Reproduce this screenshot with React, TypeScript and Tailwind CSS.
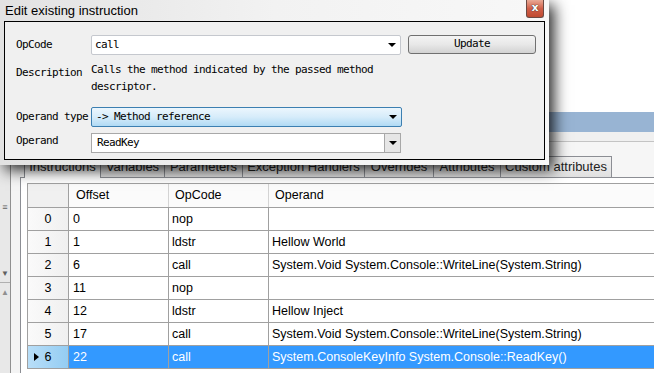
const rows = [
  { n: "0", off: "0", op: "nop", arg: "" },
  { n: "1", off: "1", op: "ldstr", arg: "Hellow World" },
  { n: "2", off: "6", op: "call", arg: "System.Void System.Console::WriteLine(System.String)" },
  { n: "3", off: "11", op: "nop", arg: "" },
  { n: "4", off: "12", op: "ldstr", arg: "Hellow Inject" },
  { n: "5", off: "17", op: "call", arg: "System.Void System.Console::WriteLine(System.String)" },
  { n: "6", off: "22", op: "call", arg: "System.ConsoleKeyInfo System.Console::ReadKey()", sel: true },
];

const tabs = [
  { label: "Instructions", w: "w-[77px]", active: true },
  { label: "Variables", w: "w-[65px]" },
  { label: "Parameters", w: "w-[79px]" },
  { label: "Exception Handlers", w: "w-[123px]" },
  { label: "Overrides", w: "w-[70px]" },
  { label: "Attributes", w: "w-[68px]" },
  { label: "Custom attributes", w: "w-[112px]" },
];

function Arrow() {
  return <span className="w-0 h-0 border-l-[4px] border-r-[4px] border-t-[4px] border-l-transparent border-r-transparent border-t-black" />;
}

function Grid() {
  return (
    <div className="border-t border-l border-[#a0a0a0] text-[12.5px] text-black" style={{ fontFamily: '"Liberation Sans", Arial, sans-serif' }}>
      <div className="flex h-[24px] border-b border-[#a0a0a0]">
        <div className="w-[41px] border-r border-[#a0a0a0] bg-[#f0f0f0]" />
        <div className="w-[100px] border-r border-[#d4d4d4] bg-[#fbfbfb] pl-[7px] flex items-center">Offset</div>
        <div className="w-[100px] border-r border-[#d4d4d4] bg-[#fbfbfb] pl-[6px] flex items-center">OpCode</div>
        <div className="flex-1 bg-[#fbfbfb] pl-[6px] flex items-center">Operand</div>
      </div>
      {rows.map((r) => (
        <div key={r.n} className={"flex h-[23px] border-b border-[#a0a0a0] " + (r.sel ? "bg-[#3399ff] text-white" : "bg-white")}>
          <div className={"w-[41px] border-r border-[#a0a0a0] relative flex items-center justify-center text-black " + (r.sel ? "bg-gradient-to-r from-[#b8def8] to-[#94cdf3]" : "bg-gradient-to-r from-[#fafafa] to-[#f0f0f0]")}>
            {r.sel && (
              <span className="absolute left-[6px] top-[7px] w-0 h-0 border-t-[4px] border-b-[4px] border-l-[5px] border-t-transparent border-b-transparent border-l-black" />
            )}
            {r.n}
          </div>
          <div className="w-[100px] border-r border-[#a0a0a0] pl-[4px] flex items-center">{r.off}</div>
          <div className="w-[100px] border-r border-[#a0a0a0] pl-[3px] flex items-center">{r.op}</div>
          <div className="flex-1 pl-[3px] flex items-center whitespace-nowrap">{r.arg}</div>
        </div>
      ))}
    </div>
  );
}

function Dialog() {
  const mono = { fontFamily: '"DejaVu Sans Mono", "Liberation Mono", monospace', letterSpacing: "-0.62px" };
  return (
    <div className="absolute left-0 top-0 w-[549px] h-[165px] bg-gradient-to-r from-[#e2e2e2] via-[#f2f2f2] to-[#f8f8f8] shadow-[5px_5px_14px_rgba(0,0,0,0.85)]">
      <div className="h-[21px] flex items-center pl-[5px] text-[13px] text-black" style={{ fontFamily: '"Liberation Sans", Arial, sans-serif' }}>
        Edit existing instruction
      </div>
      <div className="absolute right-[5px] top-0 w-[18px] h-[18px] rounded-b-[3px] border border-t-0 border-[#6b4a44] bg-gradient-to-b from-[#e9a995] via-[#d0604a] to-[#c04a30] flex items-center justify-center">
        <span className="text-white text-[11px] font-bold leading-none pb-[2px]" style={{ fontFamily: '"DejaVu Sans", sans-serif', textShadow: "0 0 1px #333, 0 0 1px #333" }}>x</span>
      </div>
      <div className="mx-[4px] h-[139px] border border-black bg-[#f0f0f0] pl-[11px] pt-[13px] text-[11px] text-black flex flex-col" style={mono}>
        <div className="flex h-[20px]">
          <div className="w-[75px] flex items-center">OpCode</div>
          <div className="w-[310px] h-[20px] bg-white border border-[#c5c8ce] rounded-[2px] flex items-center pl-[3px] pr-[4px]">
            <span className="flex-1">call</span>
            <Arrow />
          </div>
          <div className="ml-[7px] w-[128px] h-[19px] rounded-[3px] border border-[#707070] bg-gradient-to-b from-[#f4f4f4] via-[#e8e8e8] to-[#d2d2d2] flex items-center justify-center">
            Update
          </div>
        </div>
        <div className="flex mt-[6px] h-[34px]">
          <div className="w-[75px] pt-[4px]">Description</div>
          <div className="leading-[17px]">
            Calls the method indicated by the passed method
            <br />
            descriptor.
          </div>
        </div>
        <div className="flex mt-[12px] h-[20px]">
          <div className="w-[75px] flex items-center">Operand type</div>
          <div className="w-[311px] h-[20px] rounded-[2px] border border-[#3c7fb1] bg-gradient-to-b from-[#ecf6fd] via-[#d6ecfa] to-[#b0daf4] flex items-center pl-[4px] pr-[4px]">
            <span className="flex-1">-&gt; Method reference</span>
            <Arrow />
          </div>
        </div>
        <div className="flex mt-[6px] h-[20px]">
          <div className="w-[75px] pb-[4px] flex items-center">Operand</div>
          <div className="w-[310px] h-[20px] bg-white border border-[#a8a8a8] flex items-center pl-[5px]">
            <span className="flex-1">ReadKey</span>
            <div className="w-[16px] h-[18px] bg-[#e6e6e6] border-l border-[#a8a8a8] flex items-center justify-center">
              <Arrow />
            </div>
          </div>
        </div>
      </div>
    </div>
  );
}

export default function App() {
  return (
    <div className="relative w-[654px] h-[373px] overflow-hidden bg-white" style={{ fontFamily: '"Liberation Sans", Arial, sans-serif' }}>
      <div className="h-[112px] bg-white" />
      <div className="h-[20px] bg-[#98b4d3]" />
      <div className="h-[10px] bg-[#f0f0f0] border-b border-[#c4c4c4]" />
      <div className="flex h-[231px]">
        <div className="w-[20px] flex bg-[#f0f0f0]">
          <div className="w-[10px] flex flex-col bg-[#e8e8e8] text-[#606060] text-[8px]">
            <div className="h-[141px] flex flex-col items-center justify-end pb-[4px] border-b border-[#b0b0b0]">
              <span className="mb-[58px] text-[9px] leading-none">≡</span>
              <span className="leading-none">▼</span>
            </div>
            <div className="pt-[6px] flex justify-center text-[#909090] leading-none">▲</div>
          </div>
          <div className="w-[1px] bg-[#909090]" />
          <div className="flex-1 bg-[#f4f4f4]" />
        </div>
        <div className="flex-1 flex flex-col bg-[#f6f6f6]">
          <div className="h-[13px]" />
          <div className="h-[22px] flex items-end pl-[4px] text-[13px] text-[#222]">
            {tabs.map((t) => (
              <div
                key={t.label}
                className={
                  t.w +
                  " flex items-center justify-center border border-b-0 border-[#8c8e94] whitespace-nowrap " +
                  (t.active ? "h-[24px] bg-white -mb-[1px] relative" : "h-[21px] bg-gradient-to-b from-[#f2f2f2] to-[#e0e0e0] -ml-[1px]")
                }
              >
                {t.label}
              </div>
            ))}
          </div>
          <div className="flex-1 border-t border-l border-[#8c8e94] bg-white pt-[5px] pl-[6px]">
            <Grid />
          </div>
        </div>
      </div>
      <Dialog />
    </div>
  );
}
